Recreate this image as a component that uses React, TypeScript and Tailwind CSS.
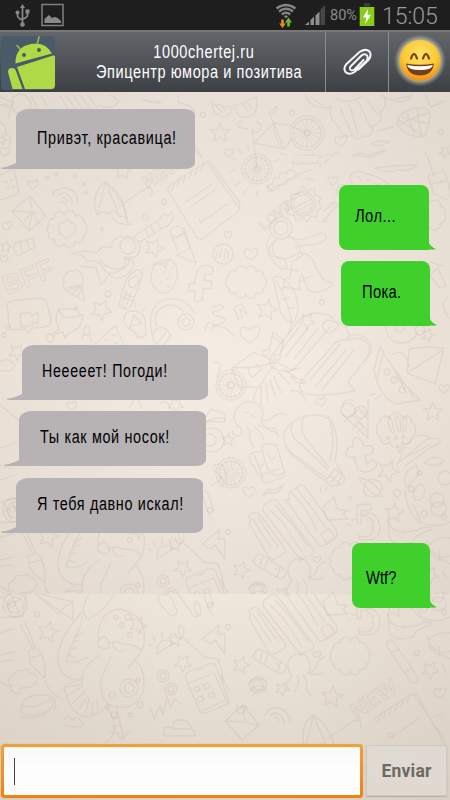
import React from "react";

type P3 = [number, number, number];

const starPath = (x: number, y: number, r: number, turn = 0) => {
  const pts: string[] = [];
  for (let i = 0; i < 10; i++) {
    const a = ((i * 36 - 90 + turn) * Math.PI) / 180;
    const q = i % 2 ? r * 0.45 : r;
    pts.push(`${(x + q * Math.cos(a)).toFixed(1)} ${(y + q * Math.sin(a)).toFixed(1)}`);
  }
  return "M" + pts.join("L") + "Z";
};

const heartPath = (x: number, y: number, s: number) =>
  `M${x} ${y + s}C${x - s * 1.6} ${y + s * 0.2} ${x - s} ${y - s * 1.2} ${x} ${y - s * 0.3}C${x + s * 0.9} ${y - s * 1.4} ${x + s * 1.6} ${y} ${x} ${y + s}Z`;

const cloudPath = (x: number, y: number, rx: number, ry: number, n: number) => {
  let d = "";
  for (let i = 0; i <= n; i++) {
    const a = (i / n) * Math.PI * 2;
    const px = (x + rx * Math.cos(a)).toFixed(1);
    const py = (y + ry * Math.sin(a)).toFixed(1);
    const q = ((rx + ry) / n) * 1.7;
    d += i ? `A${q} ${q} 0 0 1 ${px} ${py}` : `M${px} ${py}`;
  }
  return d;
};

const wheelSpokes = (x: number, y: number, r: number) => {
  let d = "";
  for (let i = 0; i < 16; i++) {
    const a = (i / 16) * Math.PI * 2;
    d += `M${x + 3 * Math.cos(a)} ${y + 3 * Math.sin(a)}L${x + r * Math.cos(a)} ${y + r * Math.sin(a)}`;
  }
  return d;
};

const stars: P3[] = [
  [220, 133, 10], [154, 248, 10], [123, 171, 9], [101, 310, 11], [267, 310, 11], [307, 321, 8],
  [428, 335, 7], [433, 412, 10], [388, 471, 11], [394, 513, 10], [17, 352, 9], [48, 537, 11], [183, 568, 9],
  [241, 570, 9], [175, 545, 7], [282, 594, 7], [332, 602, 11], [430, 575, 9], [5, 655, 7],
  [445, 152, 6], [2, 140, 5], [228, 440, 7], [138, 530, 9], [6, 247, 6], [176, 405, 8],
];
const hearts: P3[] = [
  [33, 184, 5], [7, 225, 5], [4, 258, 4], [229, 152, 5], [251, 253, 7], [228, 234, 4], [333, 180, 5], [341, 140, 6],
  [250, 333, 10], [444, 388, 5], [321, 401, 5], [72, 405, 5], [249, 491, 6], [241, 614, 5], [440, 597, 6],
  [132, 660, 5], [5, 151, 5], [317, 559, 4],
];
const circles: P3[] = [
  [203, 115, 2.5], [164, 202, 2.5], [145, 217, 3], [47, 178, 1.5], [56, 174, 1.5], [75, 176, 1.5], [84, 184, 1.5], [86, 193, 1.5],
  [102, 229, 1.5], [292, 113, 2.5], [441, 132, 2.5], [322, 302, 2.5], [108, 294, 3], [76, 308, 1.5], [50, 338, 4], [397, 493, 3.5],
  [228, 532, 2.5], [37, 519, 2.5], [210, 510, 2.5], [207, 659, 2.5], [97, 669, 2.5], [417, 558, 2.5],
  [391, 640, 2.5], [420, 473, 2], [424, 514, 3], [411, 489, 3], [444, 517, 2.5], [437, 500, 7], [445, 478, 7],
  [257, 169, 15], [257, 169, 12], [257, 169, 2.5], [307, 133, 17], [307, 133, 14], [307, 133, 2.5],
  [303, 204, 12], [303, 204, 9.5], [223, 254, 10], [281, 228, 11], [281, 228, 7], [186, 322, 8], [186, 322, 4], [128, 246, 8],
  [231, 473, 15], [231, 473, 12], [231, 385, 15], [231, 385, 12], [231, 385, 3], [420, 330, 5], [400, 327, 5],
  [387, 372, 3], [394, 380, 3], [402, 390, 3], [258, 590, 8], [258, 590, 5], [163, 581, 6], [171, 594, 6], [163, 581, 3],
  [171, 594, 3], [15, 510, 12], [15, 510, 8], [12, 509, 3], [210, 440, 6], [212, 440, 12], [348, 410, 7], [361, 412, 6],
  [8, 328, 2], [4, 335, 2], [388, 438, 1.5], [396, 438, 1.5], [403, 437, 1.5],
  [128, 522, 3], [122, 530, 2.5], [116, 522, 2], [130, 540, 2.5], [112, 600, 3],
  [114, 620, 3], [108, 612, 2], [130, 620, 2], [140, 610, 3], [138, 585, 2], [129, 593, 9], [129, 593, 5],
];

const sketches: string[] = [
  // wings and feathers
  "M305 95q6 16 26 12q-4 10 8 20q4 12 14 8q4 8 10 1q12 2 9-10q12-2 8-14q9-6 3-17M335 98q16 8 28-3M340 108l12 26M350 106l8 29M359 103l12 25M366 98l12 17M380 95q26 14 32-1M310 97l12 8M395 99l15-3M425 95l6 12l14-6",
  // sunglasses
  "M212 104l18 3l6-2q12-4 20-8q3 18-8 20q-12 2-12-9l-4 1q-3 10-12 7q-8-3-8-14M216 106l6 7M222 106l4 5M242 103l6 8M247 102l5 6",
  // bicycle
  "M257 169l-5-40M248 129l-10-2q-2-5 4-6M252 131q6 3 9-2q1-6-5-7M254 143l20-20l10 26l-30-6M274 123l15 2l18 8M274 123l-5-9q8-9 8-8q-1 8-5 8M284 149l8-10M280 153l6 2M283 149q-8-8-10-26",
  "M236 160l-5-2M235 170l-6 2M240 182l-5 4M247 188l-3 6M257 191v6M268 186l4 5M273 162l6-3M242 153l-4-4M249 150l-2-5",
  // plant and sun badge
  "M268 191q-3-7 5-7q-2-7 6-6q0-8 8-4q0-7 9-2q-2 8-8 7q-1 7-8 6q-2 6-12 6M295 175l16-5M306 178l8 2M272 188l28-13",
  "M303 186l4 5l7-3l1 7l6 2l-2 6l3 5l-5 3l0 6l-6-1l-4 6l-5-4l-6 3l-2-6l-7-1l2-6l-3-5l5-3l0-6l7 0zM296 207l14-7M297 211l14-7",
  // notepad
  "M167 189l4-5l37-23l3 2l29 40l-2 9l-36 27l-5-1zM208 163l31 45M171 191l4-8M177 187l3-9M183 183l3-8M189 179l3-8M195 175l3-9M201 171l3-9M186 202l26-18M190 207l25-17M199 218l2 6l4-8M205 220l22-16",
  // umbrella and envelope
  "M105 182q-15 12-8 33q7-6 11-1q8-7 12 3q6-4 8 8q-2-30-23-43M97 215q5-15 8-33q7 15 15 35M105 182q20 18 23 43M112 218q8 8 19 6M120 206l25-17q8-6 7 6l-3 1",
  "M12 211l18-15l16 20l-17 15zM12 211l20 1l14 4M30 196l2 16l-3 19M24 222l8-10l8 12",
  "M53 195q3-8 14-7q11 3 11 15M58 196q4-5 9-2q5 3 5 10M62 198q4-2 5 3M60 203q5-4 6 3M54 190l-2 4",
  // guitar
  "M122 237q-12 1-10 11q-10-4-15 5q-12-4-26 1q13-1 16 8q11-4 17 7q4 8 15 2q9-6 5-14q16 3 16-10q-2-13-18-10M134 236l26-17M140 242l26-16M160 219l4-6l4 3l4-4l2 6l-7 9M145 229l4 8M151 226l3 7M157 222l4 7",
  // pencils
  "M170 231q6-8 14-2l12 34l-16-6zM171 236q7 2 15-5M172 240l12-6M176 256l14-8M190 248l-7-17M196 148l-9-23q-4-4-6 1l9 21l12 10zM15 243l18-5l2 9l-17 9q-6-5-3-13M20 243l3 11M27 239l2 10",
  // calculator and scraps on the left edge
  "M0 175l14-6l5 25l-19 6M4 182h3M10 180h3M6 188h3M12 187h3M0 122q8 4 5 12q8 2 4 12M0 105q14-4 8 14M0 97l14 5q-4 8-10 4",
  "M12 99q12-12 19 4q0 12-12 11q-9-3-7-15M38 109l-7-13M47 106l-6-10M60 96l8 13M66 95l10 15M73 95l10 15M80 95l10 14M88 95l9 13M99 106q16 4 20-5l-8-6M141 100l20 3M143 98q4 6 16 3M178 96q-2 8 6 8q8 2 11 8",
  // astronaut
  "M270 235q-8 14 4 27q7 9 13 7l-2-10l-10-3q-6-10 2-17M289 237q14 6 10 16l-13 6M273 242q-9 10 3 16l8 1M288 236q12 6 19 2l13-5q8 0 6 6q-6 6-20 6l-10 2M299 252q14 2 17 16l10 14q8-2 6 4q-16 10-24 4l-6-16q-4 6-2 16l-16-3q-2-10 6-9l2-14M292 262l11-7M300 281l11-5M287 269l11 2",
  "M345 185q-8-2-8 6l-1 5M324 211l10-9l4 3l-10 10M322 222l8-8M323 221l4 1",
  // swooshes, plane, bullet
  "M352 156q8-6 17 0q7-4 17-6q-12 8-18 7q-8-2-16-1M371 144q8-5 18-2q-10 6-18 2M375 168q20-3 42-3q-6 7-20 5q-10 4-22-2M377 131l16-4M350 179q2-12 18-5q18 4 28 18q6 10-4 13l-22-8q-18-8-20-18M358 176l4 5M366 180h4M375 184h4M380 193l-6 14l16-4M426 152q-2 4 2 6l6 18M434 174l-6 2l6 18l14 6M434 174l9-3q8 12 7 26M432 184l13-3",
  "M397 124q2-15 24-16q10-1 9 9q-2 14-6 20q-20 0-27-13M400 125q12-8 29-12M407 113l7 20M417 108l4 28M399 120l24 16M402 117l26 7",
  // ice cream and dove
  "M64 282q-2-10 9-11q5-4 9 4q3 8-2 11l-13 5q-6-3-3-9M67 291l17 10l-2-17M72 294l9-8M77 297l5-8M68 288l14-3",
  "M80 266l16 2l5 17l8-10q10 8 22-4q8-12-6-12M100 260q10 12 24 8q6-4 4-8",
  // phone, speech bubble with camera, bird
  "M127 278l9-8q7-1 7 5l-12 31q-6 6-12 0q0-6 8-28M129 280l7-4q5 0 3 5l-5 7q-8-1-5-8M141 274l2-6M125 293l8 4M123 297l9 4M127 291l-4 10M131 292l-4 12",
  "M8 310q-4-6 3-9l28-3q7-1 8 6l4 15q1 7-7 8l-12 1l-3 5l-4-4l-12 1q-5-2-5-20M20 314l10-2l2 4l6-4v11l-6-1l1 3l-12 2z",
  "M59 309q3 12 13 8l11-2q-1 15-14 18l-4 5l-2-6l-10 2l6-5q-6-12 0-20M59 309l14 0q4-1 7 6",
  "M82 340l3-14l4 1l2 15M84 335h6M95 344l20-18l12 24M105 340h2M112 335h3M115 343h3",
  // light bulb, strawberry, headphones
  "M124 322q-1-11 9-11q12 0 12 12l1 12q-5 5-10 0q-2-6-8-7zM130 327l4-12l7 8zM137 338l7-2M125 308l-3-4M135 307v-4M143 310l2-3",
  "M153 269q-6 10 4 22q8 5 15-2q10-16 2-26q-5-6-12-2q-9 1-9 8M153 264l10 0l8-5M161 263l5 5l1-6M158 275h1M164 272h1M170 276h1M160 283h1M168 286h1M166 279h1M172 268h1",
  "M152 335q-6-30 14-36q20-3 28 14M156 325q-3-17 12-20q10-1 15 7M156 329q10-5 15 8M157 344l9-12M163 346l8-11M156 329q-6 6-1 14",
  // letter f block, coil, scraps
  "M195 283l-6 1l-1 7h7l-1 9q3 3 8 0l1-11l8-1l1-7l-8-1q0-8 4-6q5 2 5-5q-2-5-11-3q-7 4-7 17z",
  "M212 307q12-4 11 1q-2 3-9 3q-4 3 3 5q8 1 8 4q-2 5-12 5l13 3l8 8M205 330l3-8l6 2l-2 6M234 307l4 12l4-2l-2-8l7 5l-5-10zM216 258l2-8M219 258l3-9M224 258l2-9M228 258v-7",
  // leaf feather, musical note
  "M274 283q-3-8 6-6q17 8 18 32q-2 13-6 14q-12-4-13-18zM276 281q12 18 16 42l-3 10M280 290l5-3M283 300l6-3M287 309l7-2",
  "M269 350l4-18l11 9l-4 14M269 350q-7-1-6 4q4 5 7-2M280 355q-7-2-6 3q5 5 7-2M272 336l11 8",
  // two writing bubbles
  "M323 314q-20-4-30 14l-21 27q-6 12 4 14q14 6 20-2l34-40M323 314q8 0 12 8q12 0 14 14M327 320q14 2 10 8q-10 10-14 0q-2-4 4-8M280 352l20-26M286 356l22-28M294 359l24-31M345 340q-10 0-14 8l-29 32q-6 10 3 13q8 3 16 2l16-1l18-3l-7-9l20-26q5-16-12-18zM310 380l30-36M316 386l30-36M322 390l32-40M346 340l5-5q14-2 20 10q2 9-6 15",
  // love letter with fringe
  "M232 368l22-16l22 10l-17 25l-20 0zM232 368l24-1l20-5M250 375q-4-8 4-8q4-5 8 2l-9 8zM276 362l16 8M257 388l-4 12M261 385l0 20M266 383l2 18M270 380l5 16M274 377l7 16M278 372l12 12M284 369l11 8M290 376l16 6q-8 4-16-6M291 391q10-2 15 10M290 370l12-2",
  // sail boat
  "M380 347l22 35l18 18l-24 4q-17-8-22-34zM384 350l-7 28M407 373l2-24q14-3 35-1l-9 36zM407 373l37-24M392 355q14-8 17 12M389 361l18 33M396 370l18 28M385 326q3 16 15 17q14 0 18-12",
  "M430 275l8-7l8 18l-6 2zM447 298q-8 7 2 20M430 262l14 4M370 395l5-1M375 399l6-4",
  // octopus, hot-air balloon, cone
  "M241 428q-10-6-6-16q8-14 20-9q12 6 6 17q8 2 13-4q6-4 12-1M261 422q4 8 14 6l3 8M241 428q2 6-2 8q-6 0-7-5M246 427q6 4 3 10l4 9M254 427q8 4 10 14M258 425q10 4 18 8M244 412l4 1M251 415l3 2",
  "M285 443q-5-12 9-22q22-12 38 0q8 18 3 40l9 16q2 4-3 8l-9 1l-12-9l-23-18q-10-6-12-16M294 421q-8 14 8 24l26 25M305 415q-8 14 4 28l20 24M328 416q8 18 2 46M285 443q4 10 14 15l28 21M327 479l8-10l10 8M331 482l10-11M337 485l6-11M330 476l10 8",
  "M342 414l26 24l0-38M345 421l14-12l9 6M352 429l10-10M357 433l8-7M352 414l16 18M361 412l7 7M343 407q-2-8 10-7",
  // exclamation marks in the cloud, binoculars
  "M388 421q-1-8 4 0l2 11q-3 4-6-11M396 420q-1-8 4 0l1 11q-3 4-5-11M403 421q2-8 4 0l-2 11q-3 0-2-11M397 445l2 8l5-10",
  "M250 461q-2-8 6-9l6-1q-1-9 9-7q6 0 7 6l6 20q4 6-3 8l-14 5q-4 0-6-5zM262 451l8 24M255 456l8 22M261 475l21-7M257 462l2 5l5-3M268 455l3 5l4-3M272 473q6 6 12-1",
  // letter t block, planet with ring, comet
  "M353 446q-2-9 5-8q4 2 6 8q10-2 9 4q0 5-8 5l2 9q6-7 10-1q-1 9-12 9q-10-1-10-15q-9 2-9-4q1-6 7-7",
  "M364 488q2-10 11-8q9 2 7 10q-5 9-14 6q-6-2-4-8M365 486q-8-8-4-8q16 4 21 18q-6 2-17-10M399 462q5-22 21-27q10 0 10 4M397 464l26-22q4-5 17-3q2 5-9 8l-26 19M403 459l28-15",
  "M405 483q-2-14 12-17q4 8-4 14q-8 12-8 3M424 463q10-10 20-2q-8 8-20 2M405 490q2 28 20 34q14 4 25-2M413 493q8-16 12-3q-2 12-10 10zM431 507q4-8 14-3q4 8-4 11q-10 2-10-8M413 505q6 12 9 18",
  // striped speech bubbles
  "M248 516l5-3q4-2 7 2l24 32q4 4-1 7l-7 4q-4 3-8-2l-19-33l2-4zM253 519l10 16l8 12M257 516l12 18l9 12M264 505l7-5q4-2 7 2l35 47q3 4-2 6l-6 2l-5 4l0-4q-2 0-4-3l-33-43zM270 510l14 14l18 28M275 505l17 19l16 22M284 500l6 0q-4-8 6-12l4-3q4-1 6 3l30 42q3 6-1 9l-10 6q-5 3-8-2l-30-42M291 492l14 16l12 22M297 489l14 18l14 20M321 533l8-4l6 8l-9 6z",
  "M263 496q4-9 8-6q6 0 12-5q-4 9-12 8q-4-2-8 3",
  "M323 507l11-10l3 12l10 2l-4 3l5 5l-21 1zM321 492l-1-5M325 491l2-4M349 500l3-3M347 524l4 2M352 520l5-1M357 505v18l4 1v-8q12-2 12 12q-1 12-13 8l-1 3M357 505l14-1v6l-10 1l1 5l6-3q12 2 12 16q-2 14-20 10l-2-6M370 528h1M367 520h1M373 521h1",
  "M388 520q2 12 16 12q12 0 20-5q10 0 7 3q-16 4-18 12q-20 6-24-6zM397 535h1M401 538h1M403 533h1M427 541l3 12l10 8l-1-10M428 546q8-10 22-8M430 550q10 10 20 6",
  // scraps around the left bubbles
  "M0 448l17-6M0 465l14 4M0 480l14-5M36 487l12 9M54 480l10 12M0 405l22 18M0 362q10-6 15 4q-4 8-15 4M96 400l6-6l7 5M130 407l6-12l6 14M160 403q8-4 10 5M203 421l8-12l14 5v8zM214 363q10-4 3 14",
  "M204 424q14-10 21-4M213 466q10-6 12 6q4 12-6 14M214 470l10 10M211 486l12-8M205 490q6 8 8 20",
  // big octopus
  "M98 546q-1-30 22-32q20 4 24 22q2 17-6 25l-10 12M98 546q6-8 10 0q4 8-4 8q-8-2-6-8M109 549q6-4 14 0q8 0 14 3l4 3M113 549q2 10 13 6M135 565q12 10 8 32q-8 18-26 15q-18-2-16-28l10-22M100 560q-20 12-18 30l-18 2q6 28 22 30q14-2 20-10M82 522q-2 14-8 22l-8 22q8 4 22-4M82 517q-22 24-24 44q-1 24 24 24M76 542l6-4M73 547l6-2M70 554l6-1M68 560l7 2M66 590l14-6M68 600l15-9M73 608l12-12M80 613l8-12M86 617l3-14M92 620l1-12M98 618l-1-12M107 612q16 26-2 36M116 611l8 34M112 623l8-1M112 631l9-1M110 637l9 1",
  // paintbrush, cabbage, paper plane
  "M22 530q-2 4 2 6l9 18M25 528l10 24M28 556l8-3q10 6 9 30q-10-8-15-15zM30 563l12-3M45 586q4 12 20 20M0 560l14-3M0 567q8-3 13-1M0 538q9-4 14-4M0 503q10-6 26-4l-3 22l-23 2M3 501l8 18M12 501l8 20M3 512l18-8M33 497l40 10v18zM33 497l26 22l6-8l8-4M90 497q-12 20-2 27q12-4 26-24",
  "M9 588q-2-6 5-7q1-8 8-5q6-4 8 2q10 2 6 9l-5 5l-10 1l-3 6q-8-2-9-11M21 617q-1-16 18-17q16-1 16 6q-8 20-34 16M22 611q12 3 28-6M22 618q10 6 28-3M50 603q9 5 4 12M0 586q10 8 13 4M64 625q4-8 8 1q6-8 11 4q-8 4-18 0",
  // lightning, watermelon slice, meandering line
  "M202 544l17-14l-1 9l7 0l0 20l-10-14l-4 4zM157 554q4-14 17-6l-17 11zM152 551l-3-2M155 546l-2-5M162 543v-5M170 541l2-4M180 540q12 10 24 22l14 2q6 18 4 20l8 12M159 508q-4-14 12-6l6 14q-2 8-8 3zM196 506q6 4 4 15q-8-6-4-15M178 499l12 16q4 10 8 5M203 495q4 20 10 25M180 540q-4-12 3-8q3 8-3 12",
  // smartphone
  "M186 584q-2-6 5-8l17-7q6-2 8 3l12 31q2 5-3 7l-19 8q-5 2-7-4zM189 588l25-10l12 27l-22 10M194 593l4-2l2 4l-4 2zM203 590l5-2l2 4l-5 2zM197 603l5-2l2 4l-5 2zM208 599l5-2l2 4l-5 2zM213 610h2M197 576l7-3",
  // pulse and car
  "M150 612l4 12l6-13l3 8l4-17l4 10l4-8l5 4M164 640q-2-10 8-7l3-7q6-2 12 0l5 8q6 6 1 7l-28 0zM172 634h18M118 640l3 4l10-8M224 586l-2-6",
  // USB stick, little octopus, globe
  "M255 558q2-5 7-3l22 14q4 3 1 6q-2 5-7 3l-22-13q-5-3-1-7M263 556l-3 9M268 560l-4 9M281 566l-4 11M275 568l4 2",
  "M292 581q-8-10-1-19q12-8 18 3q3 8-1 13q8-2 8-8q5-8 9-8M308 578q8 3 16 0M292 581q-8 8-3 14M297 581q4 8-3 16M303 580q6 6 3 14l5 6",
  "M248 590q4-10 19-4M250 596q6-8 17-3M253 600q6-8 13-4",
  "M387 552q-2-8 5-7l26 37q0 5-1 6q-5 0-8-3zM391 558l8-4M404 578l8-5",
  "M225 626l18-16l16 20l-17 15zM225 626l20 1l14 4M243 610l2 16M265 620q3-8 14-7q11 3 11 15M270 621q4-5 9-2q5 3 5 10M274 623q4-2 5 3",
  "M313 620q-15 12-8 33q7-6 11-1q8-7 12 3q6-4 8 8q-2-30-23-43M305 653q5-15 8-33q7 15 15 35M327 644l25-17q10-6 9 6M373 626l4-5l37-23l3 2l29 52M414 600l31 45M377 628l4-8M383 624l3-9M389 620l3-8M395 616l3-8M401 612l3-9M407 608l3-9M392 642l26-18",
  "M434 622l8-3M442 570l4 8M439 558l11 6",
];

const clouds: [number, number, number, number, number][] = [
  [67, 229, 19, 14, 11], [67, 229, 8, 7, 6], [246, 282, 20, 12, 12], [396, 430, 19, 12, 10],
  [350, 561, 19, 15, 12], [430, 215, 15, 12, 8],
];

function Doodles() {
  return (
    <g fill="none" stroke="#9c8b7c" strokeOpacity="0.135" strokeWidth="1.3" strokeLinecap="round" strokeLinejoin="round">
      {stars.map(([x, y, r], i) => <path key={"s" + i} d={starPath(x, y, r, (i * 23) % 40)} />)}
      {hearts.map(([x, y, r], i) => <path key={"h" + i} d={heartPath(x, y, r)} />)}
      {circles.map(([x, y, r], i) => <circle key={"c" + i} cx={x} cy={y} r={r} />)}
      {clouds.map(([x, y, rx, ry, n], i) => <path key={"k" + i} d={cloudPath(x, y, rx, ry, n)} />)}
      {sketches.map((d, i) => <path key={"p" + i} d={d} />)}
      <path d={wheelSpokes(257, 169, 12) + wheelSpokes(307, 133, 14) + wheelSpokes(231, 473, 12) + wheelSpokes(231, 385, 12)} strokeWidth="0.9" />
      <path d="M292 163h26v-5l20-6l-18 14v-3l-27 2zM295 155h25" strokeDasharray="5 3" />
    </g>
  );
}

function Wallpaper() {
  return (
    <svg className="absolute inset-0 h-full w-full" viewBox="0 92 450 708" preserveAspectRatio="none" aria-hidden="true">
      <defs>
        <linearGradient id="upper" x1="0" y1="0" x2="0" y2="1">
          <stop offset="0" stopColor="#e8e0d7" />
          <stop offset="0.25" stopColor="#efe7de" />
          <stop offset="0.55" stopColor="#f4ebe2" />
          <stop offset="0.8" stopColor="#eee5dc" />
          <stop offset="1" stopColor="#e8dfd6" />
        </linearGradient>
        <linearGradient id="lower" x1="0" y1="0" x2="0" y2="1">
          <stop offset="0" stopColor="#efe6dc" />
          <stop offset="1" stopColor="#ddd4ca" />
        </linearGradient>
        <linearGradient id="sides" x1="0" y1="0" x2="1" y2="0">
          <stop offset="0" stopColor="#c8bcae" stopOpacity="0.2" />
          <stop offset="0.4" stopColor="#c8bcae" stopOpacity="0" />
          <stop offset="0.65" stopColor="#c8bcae" stopOpacity="0" />
          <stop offset="1" stopColor="#c8bcae" stopOpacity="0.22" />
        </linearGradient>
        <clipPath id="clipUpper"><rect x="0" y="92" width="450" height="502" /></clipPath>
        <clipPath id="clipLower"><rect x="0" y="499" width="450" height="206" /></clipPath>
      </defs>
      <rect x="0" y="92" width="450" height="502" fill="url(#upper)" />
      <rect x="0" y="594" width="450" height="206" fill="url(#lower)" />
      <rect x="0" y="92" width="450" height="708" fill="url(#sides)" />
      <g clipPath="url(#clipUpper)"><Doodles /></g>
      <g transform="translate(0 95)"><g clipPath="url(#clipLower)"><Doodles /></g></g>
    </svg>
  );
}

function Lettering({ children, className }: { children: string; className: string }) {
  return (
    <span className={"pointer-events-none absolute font-['Liberation_Sans',Arial,sans-serif] font-bold leading-none text-transparent [-webkit-text-stroke:1px_rgba(156,139,124,0.15)] " + className}>
      {children}
    </span>
  );
}

function Received({ children, className, text }: { children: string; className: string; text: string }) {
  return (
    <div className={"relative flex items-center rounded-[10px/6px] rounded-tl-[12px_9px] rounded-bl-none bg-[#b7b3b5] pb-[3px] " + className}>
      <svg className="absolute -left-[15px] bottom-0 h-[9px] w-[17px]" viewBox="0 0 17 9">
        <path d="M15 0V3Q11 5.500 1 7.800L0 9H17V0Z" fill="#b7b3b5" />
        <circle cx="1" cy="8.200" r="0.900" fill="#a3d69c" />
      </svg>
      <span className={"origin-left whitespace-nowrap text-[18px] leading-5 text-black " + text}>{children}</span>
    </div>
  );
}

function Sent({ children, className, text }: { children: string; className: string; text: string }) {
  return (
    <div className={"relative flex items-center rounded-[8px] rounded-br-none bg-[#40d02c] " + className}>
      <svg className="absolute -right-[7px] bottom-0 h-[9px] w-[12px]" viewBox="0 0 12 9">
        <path d="M3 0H5V2Q7 6 12 8Q9 9.300 3 8L1 9H0Z" fill="#40d02c" />
      </svg>
      <span className={"origin-left scale-x-[0.82] whitespace-nowrap text-[18px] leading-5 text-black " + text}>{children}</span>
    </div>
  );
}

function StatusBar() {
  return (
    <div className="flex h-[30px] shrink-0 items-center bg-[#1e1e1e] text-[#8b8b8b]">
      <svg className="ml-[15px] h-[24px] w-[16px]" viewBox="0 0 16 24" fill="none" stroke="#8a8a8a" strokeWidth="1.7">
        <path d="M7.500 3V21M2.500 10V12.500Q2.500 15 7.500 17M12.500 9V12Q12.500 14.500 7.500 16" />
        <path d="M7.500 1L10 5H5Z" fill="#8a8a8a" stroke="none" />
        <circle cx="2.500" cy="9.500" r="2" fill="#8a8a8a" stroke="none" />
        <path d="M10.500 6.500h4v4h-4z" fill="#8a8a8a" stroke="none" />
        <circle cx="7.500" cy="21.500" r="2.300" fill="#8a8a8a" stroke="none" />
      </svg>
      <svg className="ml-[10px] h-[24px] w-[24px]" viewBox="0 0 24 24">
        <rect x="1" y="1.500" width="21" height="21" fill="none" stroke="#808080" strokeWidth="1.500" />
        <path d="M3.500 20V16L8 12L11 15L13.500 14L16 14.500L20 18V20Z" fill="#8a8a8a" />
      </svg>
      <svg className="ml-[210px] h-[26px] w-[22px]" viewBox="0 0 22 26" fill="none" stroke="#858585" strokeWidth="2.300">
        <path d="M1.500 6.500Q11 -0.500 20.500 6.500M4 9.500Q11 4 18 9.500M6.800 12.500Q11 9 15.200 12.500" />
        <path d="M9 14.500L11 16.500L13 14.500L11 13Z" fill="#858585" stroke="none" />
        <path d="M6.200 17.500h2.600v4h2l-3.300 4.500l-3.300-4.500h2z" fill="#e98b1b" stroke="none" />
        <path d="M12.200 24.500h2.600v-4h2.200l-3.500-5l-3.500 5h2.200z" fill="#6cbe2e" stroke="none" />
      </svg>
      <svg className="ml-[8px] h-[20px] w-[21px]" viewBox="0 0 21 20">
        <path d="M15.500 4.500L20 0V20H15.500Z" fill="#464646" />
        <path d="M0 20L4 16.500V20ZM5.500 15L9 11.500V20H5.500ZM10.500 10.500L14.500 6.500V20H10.500Z" fill="#8f8f8f" />
      </svg>
      <span className="ml-[4px] w-[29px] whitespace-nowrap pt-[2px] font-[Roboto,sans-serif] text-[14.5px] leading-[30px]">80%</span>
      <svg className="h-[24px] w-[16px]" viewBox="0 0 16 24">
        <rect x="5" y="0" width="6" height="3.500" fill="#3c3c3c" />
        <rect x="0.700" y="4" width="14.600" height="19" fill="#8bcb1a" />
        <path d="M9 6L4 14.500L7.300 14.200L6.200 21L12 11.800L8.300 12Z" fill="#fff" />
      </svg>
      <span className="ml-[7px] whitespace-nowrap pt-[3px] font-[Roboto,sans-serif] text-[23px] font-light leading-[27px] text-[#9a9a9a]">15:05</span>
    </div>
  );
}

function Avatar() {
  return (
    <svg className="mt-[2px] h-[56px] w-[56px] shrink-0" viewBox="0 0 56 56">
      <rect x="1" y="1" width="54" height="54" rx="4" fill="#4b5a69" />
      <g fill="#afd947">
        <path d="M15.500 28.500Q15 12 31 9Q45 6 52 18.500Z" />
        <path d="M17 32L53 20.500Q55 20 55 22V50Q55 54 51 54H25Z" />
        <path d="M8 37Q8 33 12 33Q15 33 16 36L22.500 54H12.500Z" />
      </g>
      <path d="M20 14L17 10.500M37.500 8L39 2" stroke="#9bbd4b" strokeWidth="1.600" strokeLinecap="round" />
      <circle cx="24" cy="20" r="2" fill="#4b5a59" />
      <circle cx="39" cy="15" r="2" fill="#4b5a59" />
    </svg>
  );
}

function Header() {
  return (
    <header className="flex h-[62px] shrink-0 items-stretch border-t-2 border-[#77797c] bg-linear-to-b from-[#626569] via-[#505357] to-[#3c4044] text-white">
      <div className="flex w-[325px] items-center">
        <Avatar />
        <div className="flex flex-1 flex-col items-center pb-px pt-px pl-[17px] text-[17.5px] leading-[20px]">
          <span className="translate-x-[5px] scale-x-[0.83] whitespace-nowrap tracking-[0.7px]">1000chertej.ru</span>
          <span className="-mx-8 scale-x-[0.83] whitespace-nowrap tracking-[0.7px]">Эпицентр юмора и позитива</span>
        </div>
      </div>
      <div className="flex w-[63px] items-center justify-center border-l border-[#8b8e91]">
        <svg className="h-[30px] w-[32px]" viewBox="0 0 32 30" fill="none" stroke="#f5f5f5" strokeWidth="2" strokeLinecap="round" strokeLinejoin="round">
          <path d="M22.500 13L13.500 22.500Q10 24.500 9 22Q8.500 20.500 10 19L20.500 8.500Q24 6 26 8.500Q27.500 11 25.500 14L13.500 25Q8 28.500 4.500 25Q2 21 5.500 17L18.500 5Q24.500 1 28.500 4.500Q31 8.500 27.500 13L17.500 22.500" />
        </svg>
      </div>
      <div className="flex flex-1 items-center justify-center border-l border-[#8b8e91]">
        <svg className="h-[58px] w-[60px] shrink-0" viewBox="0 0 60 58">
          <defs>
            <radialGradient id="glow"><stop offset="0.7" stopColor="#f4f2c8" stopOpacity="0.85" /><stop offset="1" stopColor="#c9cdb8" stopOpacity="0" /></radialGradient>
            <radialGradient id="face" cx="0.5" cy="0.35" r="0.65"><stop offset="0" stopColor="#ffe36b" /><stop offset="0.65" stopColor="#fdc832" /><stop offset="1" stopColor="#ef8c17" /></radialGradient>
          </defs>
          <circle cx="30" cy="27.500" r="26" fill="url(#glow)" />
          <circle cx="30" cy="27.500" r="20.500" fill="url(#face)" />
          <path d="M21 25.500Q24 16.500 27 25.500M33 25.500Q36 16.500 39 25.500" fill="none" stroke="#7b3b12" strokeWidth="2.200" strokeLinecap="round" />
          <path d="M16 30.500Q30 33 44 30.500Q42.500 42.500 30 42.500Q17.500 42.500 16 30.500Z" fill="#74401b" />
          <path d="M17 32Q30 34.500 43 32Q42 37 30 37Q18 37 17 32Z" fill="#fff" />
        </svg>
      </div>
    </header>
  );
}

export default function App() {
  return (
    <div className="relative flex h-[800px] w-[450px] flex-col overflow-hidden font-['Liberation_Sans',Arial,sans-serif]">
      <StatusBar />
      <Header />
      <div className="relative flex flex-1 flex-col">
        <Wallpaper />
        <Lettering className="left-[256px] top-[116px] -rotate-[40deg] text-[14px]">LOVE</Lettering>
        <Lettering className="left-[2px] top-[172px] -rotate-[22deg] text-[27px]">BFF</Lettering>
        <Lettering className="left-[141px] top-[72px] -rotate-[32deg] text-[18px]">NEW</Lettering>
        <Lettering className="left-[348px] top-[596px] -rotate-[34deg] text-[22px]">NEW</Lettering>
        <main className="relative flex h-[650px] flex-col items-start">
          <Received className="mt-[17px] ml-[15.5px] h-[60px] w-[179.5px]" text="ml-[21px] scale-x-[0.8] tracking-[0.85px]">Привэт, красавица!</Received>
          <Sent className="mt-[16px] ml-[339px] h-[65px] w-[89.500px] pb-[3px]" text="ml-[16px] tracking-[0.5px]">Лол...</Sent>
          <Sent className="mt-[11px] ml-[340.500px] h-[65px] w-[89.500px] pb-[3px]" text="ml-[21px] tracking-[0.4px]">Пока.</Sent>
          <Received className="mt-[19px] ml-[21.500px] h-[55px] w-[186.500px]" text="ml-[20px] scale-x-[0.79] tracking-[0.9px]">Нееееет! Погоди!</Received>
          <Received className="mt-[11px] ml-[19px] h-[55px] w-[187px]" text="ml-[21px] scale-x-[0.8] tracking-[0.8px]">Ты как мой носок!</Received>
          <Received className="mt-[12px] ml-[16px] h-[55px] w-[187px]" text="ml-[21px] scale-x-[0.8] tracking-[0.8px]">Я тебя давно искал!</Received>
          <Sent className="mt-[10px] ml-[352px] h-[65px] w-[78px] pt-[5px]" text="ml-[14px]">Wtf?</Sent>
        </main>
        <footer className="relative flex h-[58px] items-start gap-[3px] pl-px pt-[2px]">
          <div className="h-[54px] w-[362px] rounded-[4px] bg-linear-to-b from-[#eda23b] to-[#f0810f] p-[3px] shadow-[0_0_1px_#d99a50]">
            <div className="flex h-full items-center rounded-[1px] bg-linear-to-b from-[#f8f8f7] via-[#fefefe] to-[#fdfdfd] pl-[10px]">
              <div className="h-[27px] w-px bg-[#444]" />
            </div>
          </div>
          <button className="mt-[1px] h-[51px] w-[81px] border border-[#cfc8c0] bg-[#e0dbd5]/80 pt-[2px] font-[Roboto,sans-serif] text-[17.5px] font-bold tracking-[0.2px] text-[#6d6964] shadow-[0_1px_1px_#b9b2aa]">Enviar</button>
        </footer>
      </div>
    </div>
  );
}
